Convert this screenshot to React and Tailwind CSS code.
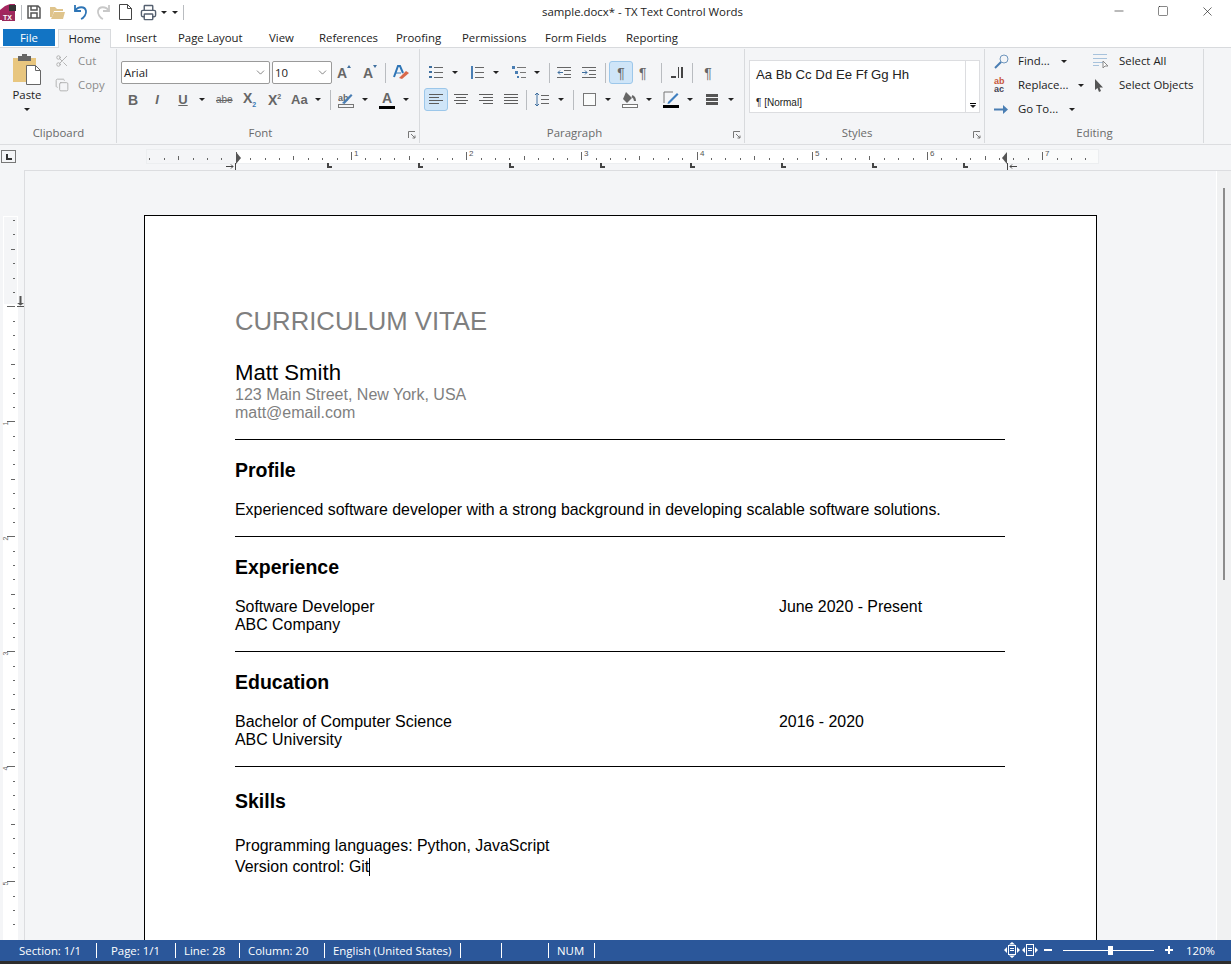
import React from "react";
import { Printer, ChevronDown, Scissors, Copy, Minus, Square, X } from "lucide-react";

const Caret = ({ className = "" }) => (
  <span className={`inline-block shrink-0 w-0 h-0 border-x-[3px] border-x-transparent border-t-[3px] border-t-[#222] ${className}`} />
);

const Sep = ({ className = "" }) => <span className={`shrink-0 w-px h-[20px] bg-[#b9bcc0] ${className}`} />;

// little 14x13 ribbon glyphs, all the line-based paragraph ones share this
const Ico = ({ w = 14, h = 13, className = "", children }) => (
  <svg className={`shrink-0 ${className}`} width={w} height={h} viewBox={`0 0 ${w} ${h}`} fill="none">{children}</svg>
);

const Bars = ({ rows }) => (
  <Ico>
    {rows.map(([x, len], i) => (
      <rect key={i} x={x} y={1 + i * 3} width={len} height="1" fill="#5c5c5c" />
    ))}
  </Ico>
);

const Bullets = () => (
  <Ico>
    {[1, 6, 11].map((y) => (
      <g key={y}>
        <rect x="0" y={y - 1} width="3" height="2" fill="#3f6f9f" />
        <rect x="5" y={y} width="9" height="1" fill="#666" />
      </g>
    ))}
  </Ico>
);

const Numbers = () => (
  <Ico>
    <rect x="1" y="0" width="2" height="13" fill="#4a7eb3" />
    {[1, 6, 11].map((y) => (
      <rect key={y} x="5" y={y} width="9" height="1" fill="#666" />
    ))}
  </Ico>
);

const Multi = () => (
  <Ico>
    <rect x="0" y="0" width="3" height="3" fill="#4a7eb3" />
    <rect x="3" y="5" width="3" height="3" fill="#4a7eb3" />
    <rect x="5" y="10" width="2" height="2" fill="#4a7eb3" />
    <rect x="5" y="1" width="9" height="1" fill="#777" />
    <rect x="8" y="6" width="6" height="1" fill="#777" />
    <rect x="9" y="11" width="5" height="1" fill="#777" />
  </Ico>
);

const Indent = ({ flip }) => (
  <Ico>
    <rect x="0" y="1" width="14" height="1" fill="#666" />
    <rect x="0" y="11" width="14" height="1" fill="#666" />
    <rect x="7" y="4" width="7" height="1" fill="#666" />
    <rect x="7" y="8" width="7" height="1" fill="#666" />
    {flip ? (
      <path d="M0 6.500h5M3 4.500l2 2-2 2" stroke="#3f6f9f" />
    ) : (
      <path d="M6 6.500H1M3 4.500l-2 2 2 2" stroke="#3f6f9f" />
    )}
  </Ico>
);

const Para = ({ className = "" }) => (
  <span className={`font-['Liberation_Sans',sans-serif] text-[14px] leading-none text-[#666] ${className}`}>¶</span>
);

const Spacing = () => (
  <Ico>
    <path d="M2 0v13M0 2l2-2 2 2M0 11l2 2 2-2" stroke="#3f6f9f" />
    {[2, 6, 10].map((y) => (
      <rect key={y} x="6" y={y} width="8" height="1" fill="#666" />
    ))}
  </Ico>
);

const Bucket = () => (
  <Ico w={16} h={17}>
    <path d="M4 1l6 6-5 5-4-4z" fill="#666" />
    <path d="M10 5c2 1 3 3 3 5" stroke="#666" strokeWidth="2" />
    <rect x="0.500" y="13.500" width="15" height="3" fill="#fff" stroke="#777" />
  </Ico>
);

const BorderPen = () => (
  <Ico w={16} h={17}>
    <path d="M1 12V1h9" stroke="#777" />
    <path d="M5 11l9-9 1.500 1.500-9 9-2 .5z" fill="#3f7fbf" />
    <rect x="0" y="14" width="16" height="3" fill="#000" />
  </Ico>
);

const ClearFmt = () => (
  <Ico w={16} h={15}>
    <path d="M1 12L5 1h2l3 7" stroke="#2e75b6" strokeWidth="2" />
    <path d="M3 8h5" stroke="#2e75b6" />
    <path d="M6 13l7-7 3 2-7 6z" fill="#d9694a" />
  </Ico>
);

const Highlight = () => (
  <Ico w={16} h={16}>
    <text x="0" y="9" fontSize="9" fill="#666" fontFamily="Liberation Sans">ab</text>
    <path d="M4 11l9-9 1.500 1.500-8 8.500z" fill="#4a7eb3" />
    <rect x="0.500" y="12.500" width="15" height="3" fill="#f4f5f7" stroke="#777" />
  </Ico>
);

const Grow = ({ down, className = "" }) => (
  <span className={`relative block shrink-0 w-[14px] h-[16px] text-[14px] leading-[16px] font-bold text-[#666] font-['Liberation_Sans',sans-serif] ${className}`}>
    A
    <span className={`absolute right-0 top-0 w-0 h-0 border-x-[2.500px] border-x-transparent ${down ? "border-t-[3px] border-t-[#3f6f9f]" : "border-b-[3px] border-b-[#3f6f9f]"}`} />
  </span>
);

const Group = ({ title, className, launcher, children }) => (
  <div className={`relative shrink-0 ${className}`}>
    <div className="h-[76px]">{children}</div>
    <div className={`text-center text-[11.400px] text-[#6a6a6a] leading-4 ${launcher ? "pr-[16px]" : ""}`}>{title}</div>
    <span className="absolute right-0 top-0 bottom-0 w-px bg-[#d8dadd]" />
    {launcher && (
      <svg className="absolute right-[4px] bottom-[4px]" width="8" height="8" viewBox="0 0 8 8" fill="none" stroke="#777">
        <path d="M.5 7V.5H7M3 3l4 4M7 4.500V7H4.500" />
      </svg>
    )}
  </div>
);

const Clip = () => (
  <svg width="30" height="32" viewBox="0 0 30 32">
    <rect x="1" y="4" width="23" height="24" fill="#e8c67f" />
    <rect x="6" y="2" width="13" height="5" fill="#666" />
    <rect x="10" y="0" width="5" height="3" fill="#666" />
    <path d="M14.500 11.500h9l5 5v14h-14z" fill="#fff" stroke="#666" />
    <path d="M23.500 11.500v5h5" fill="none" stroke="#666" />
  </svg>
);

const tabs = [
  ["Insert", "w-[52px]"],
  ["Page Layout", "w-[91px]"],
  ["View", "w-[50px]"],
  ["References", "w-[77px]"],
  ["Proofing", "w-[66px]"],
  ["Permissions", "w-[83px]"],
  ["Form Fields", "w-[81px]"],
  ["Reporting", "w-[72px]"],
];

const Ruler = () => (
  <div className="relative h-[25px] shrink-0 bg-[#f4f5f7] flex">
    <div className="w-[146px] shrink-0 pt-[5px] pl-[1px]">
      <div className="w-[15px] h-[13px] border border-[#777] bg-[#f4f5f7] flex items-end justify-center pb-[2px]">
        <span className="w-[6px] h-[6px] border-l-2 border-b-2 border-[#333]" />
      </div>
    </div>
    <div className="relative w-[953px] h-[15px] mt-[4px] bg-white border border-[#eceef0]">
      <div className="absolute left-0 top-0 bottom-0 w-[89px] bg-[#f4f5f7]" />
      <div className="absolute right-0 top-0 bottom-0 w-[94px] bg-[#fafbfb]" />
      {[["1", 207], ["2", 322], ["3", 437], ["4", 553], ["5", 668], ["6", 783], ["7", 898]].map(([n, l]) => (
        <span key={n} className="absolute top-0 text-[8px] leading-[8px] text-[#555] font-['Liberation_Sans',sans-serif]" style={{ left: l }}>{n}</span>
      ))}
      <svg className="absolute left-0 top-0" width="953" height="15" viewBox="147 150 953 15">
        {Array.from({ length: 66 }, (_, i) => i).map((i) => {
          const x = Math.round(149.400 + i * 14.400);
          const inch = i % 8 === 6;
          const mid = i % 8 === 2;
          return <rect key={i} x={x} y={inch ? 152 : mid ? 156 : 158} width="1" height={inch ? 8 : mid ? 4 : 2} fill="#666" />;
        })}
      </svg>
      <svg className="absolute left-[89px] top-[2px]" width="6" height="12" viewBox="0 0 6 12"><path d="M0 0l5 6-5 6z" fill="#555" /></svg>
      <svg className="absolute left-[855px] top-[2px]" width="6" height="12" viewBox="0 0 6 12"><path d="M5 0L0 6l5 6z" fill="#555" /></svg>
    </div>
    {/* tab stops and the two indent marks under the strip */}
    {[327, 418, 509, 600, 690, 781, 872, 963].map((x) => (
      <span key={x} className="absolute top-[18px] w-[5px] h-[5px] border-l-2 border-b-2 border-[#444]" style={{ left: x }} />
    ))}
    <svg className="absolute left-[226px] top-[18px]" width="10" height="7" viewBox="0 0 10 7" fill="none" stroke="#444"><path d="M0 3.500h7M5 1.500l2 2-2 2M9.500 0v7" /></svg>
    <svg className="absolute left-[1007px] top-[18px]" width="10" height="7" viewBox="0 0 10 7" fill="none" stroke="#444"><path d="M10 3.500H3M5 1.500l-2 2 2 2M.5 0v7" /></svg>
  </div>
);

const VRuler = () => {
  const marks = [];
  for (let i = 0; i < 50; i++) {
    const y = Math.round(4 + i * 14.375);
    const inch = i % 8 === 6;
    const half = i % 8 === 2;
    marks.push(<span key={i} className="absolute h-px bg-[#666]" style={{ top: y, left: inch ? 7 : half ? 11 : 13, width: inch ? 8 : half ? 4 : 2 }} />);
  }
  return (
    <div className="relative w-[24px] shrink-0 overflow-hidden">
      <div className="absolute left-[3px] top-[46px] bottom-0 w-[15px] bg-white" />
      <div className="absolute left-[3px] top-[46px] h-[88px] w-[15px] bg-[#f4f5f7] border border-white border-b-0" />
      <div className="absolute left-0 top-[46px] w-full h-full">
        {marks}
        {[["1", 204], ["2", 319], ["3", 434], ["4", 549], ["5", 664]].map(([n, t]) => (
          <span key={n} className="absolute left-[4px] text-[7px] leading-[7px] text-[#666] rotate-[-90deg] font-['Liberation_Sans',sans-serif]" style={{ top: t }}>{n}</span>
        ))}
      </div>
      <svg className="absolute left-[17px] top-[126px]" width="7" height="12" viewBox="0 0 7 12" fill="#555">
        <rect x="2.500" y="0" width="2" height="8" /><path d="M0 7h7L3.500 9.500z" /><rect x="0" y="10" width="7" height="1" />
      </svg>
    </div>
  );
};

const Rule = () => <div className="h-px bg-black" />;

const StatusCell = ({ w, children }) => (
  <div className={`h-full flex items-center whitespace-nowrap border-r border-white ${w}`}>{children}</div>
);

const FitIcon = ({ whole }) => (
  <svg width="16" height="16" viewBox="0 0 16 16" fill="#fff" className="shrink-0">
    <rect x="4.500" y={whole ? 2.500 : 3.500} width="7" height={whole ? 11 : 9} fill="none" stroke="#fff" />
    <rect x="6" y="6" width="4" height="1" /><rect x="6" y="8" width="4" height="1" />
    <path d="M0 8l3-3v6zM16 8l-3-3v6z" />
    {!whole && <path d="M8 0l3 2.500H5zM8 16l3-2.500H5z" />}
  </svg>
);

export default function App() {
  return (
    <div className="w-[1231px] h-[964px] overflow-hidden flex flex-col bg-white font-['Open_Sans',sans-serif] text-[11.400px] text-[#222]">
      {/* title bar */}
      <div className="h-[24px] shrink-0 flex items-center relative">
        <svg width="17" height="20" viewBox="0 0 17 20">
          <path d="M0 8l5-4 5-2 5 0v16H0z" fill="#a4265f" />
          <rect x="9" y="3" width="7" height="6" fill="#333" />
          <rect x="2" y="11" width="13" height="8" fill="#9a2a5c" />
          <text x="3" y="18" fontSize="7" fontWeight="700" fill="#fff" fontFamily="Liberation Sans">TX</text>
        </svg>
        <Sep className="ml-[4px] !h-[15px]" />
        <svg className="ml-[5px]" width="14" height="14" viewBox="0 0 14 14" fill="none" stroke="#555" strokeWidth="1.500">
          <path d="M1 1h10l2 2v10H1z" />
          <path d="M4 1v4h6V1M4 13V8h6v5" />
        </svg>
        <svg className="ml-[9px]" width="15" height="13" viewBox="0 0 15 13" fill="#dfc48c">
          <path d="M0 1h5l2 2h6v2H4l-2 6H0z" />
          <path d="M4 6h11l-2 7H1z" />
        </svg>
        <svg className="ml-[8px]" width="15" height="16" viewBox="0 0 15 16" fill="none" stroke="#2e75b6" strokeWidth="1.800">
          <path d="M2 1v6h6" />
          <path d="M2 7c3-5 10-5 11 0 .5 3-2 7-5 8" />
        </svg>
        <svg className="ml-[8px]" width="15" height="16" viewBox="0 0 15 16" fill="none" stroke="#c8c8c8" strokeWidth="1.800">
          <path d="M13 1v6H7" />
          <path d="M13 7c-3-5-10-5-11 0-.5 3 2 7 5 8" />
        </svg>
        <svg className="ml-[8px]" width="13" height="16" viewBox="0 0 13 16" fill="#fff" stroke="#444">
          <path d="M.5.500h8l4 4v11H.5z" /><path d="M8.500.500v4h4" fill="none" />
        </svg>
        <Printer size={17} strokeWidth={2} className="ml-[8px] text-[#556070]" />
        <Caret className="ml-[4px]" />
        <Caret className="ml-[5px]" />
        <Sep className="ml-[5px] !h-[15px]" />
        <div className="absolute left-[542px] top-[4px] leading-4 whitespace-nowrap">sample.docx* - TX Text Control Words</div>
        <div className="ml-auto flex items-center pr-[16px] gap-[31px] pb-[2px]">
          <Minus size={14} strokeWidth={1} className="text-[#111]" />
          <Square size={12} strokeWidth={1} className="text-[#111]" />
          <X size={15} strokeWidth={1} className="text-[#111]" />
        </div>
      </div>

      {/* tabs */}
      <div className="h-[24px] shrink-0 flex items-end border-b border-[#d8dadd]">
        <div className="ml-[3px] w-[52px] h-[17px] mb-px bg-[#1274c4] text-white flex items-center justify-center leading-none">File</div>
        <div className="ml-[3px] w-[53px] h-[19px] -mb-px bg-[#f4f5f7] border border-b-0 border-[#d8dadd] flex items-center justify-center leading-none">Home</div>
        <div className="flex h-[19px] items-center pl-[15px]">
          {tabs.map(([t, w]) => (
            <span key={t} className={`${w} whitespace-nowrap leading-none`}>{t}</span>
          ))}
        </div>
      </div>

      {/* ribbon */}
      <div className="h-[97px] shrink-0 bg-[#f4f5f7] border-b border-[#dcdde0] flex pt-px">
        <Group title="Clipboard" className="w-[117px] h-[94px]">
          <div className="flex">
            <div className="w-[47px] flex flex-col items-center pt-[5px] pl-[7px]">
              <Clip />
              <span className="leading-4 mt-px">Paste</span>
              <Caret className="mt-[5px]" />
            </div>
            <div className="pl-[8px] text-[#8b8b8b]">
              <div className="flex items-center h-[24px] gap-[9px]"><Scissors size={14} strokeWidth={1.500} className="text-[#aaa]" /><span>Cut</span></div>
              <div className="flex items-center h-[24px] gap-[9px]"><Copy size={14} strokeWidth={1.500} className="text-[#aaa]" /><span>Copy</span></div>
            </div>
          </div>
        </Group>

        <Group title="Font" launcher className="w-[303px] h-[94px]">
          <div className="pt-[12px]">
            <div className="flex items-center h-[23px] pl-[4px]">
              <div className="w-[149px] h-[23px] bg-white border border-[#9a9a9a] rounded-[2px] flex items-center justify-between px-[2px]">Arial<ChevronDown size={13} strokeWidth={1} /></div>
              <div className="ml-[2px] w-[60px] h-[23px] bg-white border border-[#9a9a9a] rounded-[2px] flex items-center justify-between px-[2px]">10<ChevronDown size={13} strokeWidth={1} /></div>
              <Grow className="ml-[5px]" />
              <Grow down className="ml-[12px]" />
              <Sep className="ml-[8px]" />
              <span className="ml-[7px]"><ClearFmt /></span>
            </div>
            <div className="flex items-center h-[23px] mt-[4px] pl-[11px] text-[#666] font-['Liberation_Sans',sans-serif] font-bold leading-none">
              <span className="w-[10px] text-[14px] text-center">B</span>
              <span className="ml-[16px] w-[6px] italic text-[13px] text-center">I</span>
              <span className="ml-[18px] w-[10px] underline text-[13px] text-center">U</span>
              <Caret className="ml-[11px]" />
              <span className="ml-[11px] w-[16px] line-through font-normal text-[10px] text-center">abe</span>
              <span className="ml-[11px] w-[14px] text-[14px] whitespace-nowrap">X<span className="text-[7px] text-[#3a78b5] align-sub">2</span></span>
              <span className="ml-[11px] w-[14px] text-[14px] whitespace-nowrap">X<span className="text-[7px] align-super">2</span></span>
              <span className="ml-[9px] w-[16px] text-[13px] whitespace-nowrap">Aa</span>
              <Caret className="ml-[8px]" />
              <Sep className="ml-[9px]" />
              <span className="ml-[7px]"><Highlight /></span>
              <Caret className="ml-[8px]" />
              <span className="ml-[11px] w-[16px] h-[18px] text-[14px] leading-[14px] border-b-[3px] border-black text-center">A</span>
              <Caret className="ml-[8px]" />
            </div>
          </div>
        </Group>

        <Group title="Paragraph" launcher className="w-[325px] h-[94px]">
          <div className="pt-[12px]">
            <div className="flex items-center h-[23px] pl-[9px]">
              <Bullets />
              <Caret className="ml-[9px]" />
              <span className="ml-[12px]"><Numbers /></span>
              <Caret className="ml-[9px]" />
              <span className="ml-[13px]"><Multi /></span>
              <Caret className="ml-[8px]" />
              <Sep className="ml-[9px]" />
              <span className="ml-[7px]"><Indent /></span>
              <span className="ml-[11px]"><Indent flip /></span>
              <Sep className="ml-[9px]" />
              <span className="ml-[3px] w-[24px] h-[23px] bg-[#cfe5f8] border border-[#9cc7ea] rounded-[3px] flex items-center justify-center"><Para /></span>
              <span className="ml-[6px] w-[12px] flex items-center"><Para /></span>
              <Sep className="ml-[10px]" />
              <span className="ml-[9px] flex items-end gap-[2px] w-[12px] h-[11px]">
                <span className="w-[6px] h-[2px] bg-[#444]" /><span className="w-[2px] h-[11px] bg-[#444]" /><span className="w-[2px] h-[11px] bg-[#444]" />
              </span>
              <Sep className="ml-[9px]" />
              <span className="ml-[11px] w-[8px] flex justify-center"><Para /></span>
            </div>
            <div className="flex items-center h-[23px] mt-[4px] pl-[4px]">
              <span className="w-[24px] h-[23px] bg-[#cfe5f8] border border-[#9cc7ea] rounded-[3px] flex items-center justify-center"><Bars rows={[[0, 14], [0, 10], [0, 14], [0, 10]]} /></span>
              <span className="ml-[6px]"><Bars rows={[[0, 14], [2, 10], [0, 14], [2, 10]]} /></span>
              <span className="ml-[11px]"><Bars rows={[[0, 14], [4, 10], [0, 14], [4, 10]]} /></span>
              <span className="ml-[11px]"><Bars rows={[[0, 14], [0, 14], [0, 14], [0, 14]]} /></span>
              <Sep className="ml-[8px]" />
              <span className="ml-[8px]"><Spacing /></span>
              <Caret className="ml-[9px]" />
              <Sep className="ml-[9px]" />
              <span className="ml-[9px] w-[13px] h-[13px] border border-[#777] bg-[#fafbfb]" />
              <Caret className="ml-[9px]" />
              <span className="ml-[11px]"><Bucket /></span>
              <Caret className="ml-[8px]" />
              <span className="ml-[11px]"><BorderPen /></span>
              <Caret className="ml-[8px]" />
              <span className="ml-[13px] flex flex-col gap-px">
                <span className="w-[12px] h-[3px] bg-[#555]" /><span className="w-[12px] h-[3px] bg-[#555]" /><span className="w-[12px] h-[3px] bg-[#555]" />
              </span>
              <Caret className="ml-[10px]" />
            </div>
          </div>
        </Group>

        <Group title="Styles" launcher className="w-[240px] h-[94px]">
          <div className="pt-[11px] pl-[4px]">
            <div className="w-[231px] h-[53px] bg-white border border-[#dcdde0] flex">
              <div className="flex-1 flex flex-col justify-between pl-[6px] font-['Liberation_Sans',sans-serif]">
                <span className="text-[13.200px] leading-4 pt-[6px] whitespace-nowrap">Aa Bb Cc Dd Ee Ff Gg Hh</span>
                <span className="text-[10px] leading-3 pb-[3px]">¶ [Normal]</span>
              </div>
              <div className="w-[14px] border-l border-[#dcdde0] flex flex-col items-center justify-end pb-[4px]">
                <span className="w-[6px] h-px bg-black mb-px" />
                <Caret />
              </div>
            </div>
          </div>
        </Group>

        <Group title="Editing" className="w-[219px] h-[94px]">
          <div className="flex">
            <div className="w-[108px] pl-[9px]">
              <div className="flex items-center h-[24px]">
                <svg width="15" height="15" viewBox="0 0 15 15" fill="none" className="shrink-0">
                  <circle cx="10" cy="5" r="4" stroke="#6f96bd" />
                  <path d="M7 8l-6 6" stroke="#4a7eb3" strokeWidth="2" />
                </svg>
                <span className="ml-[9px]">Find...</span><Caret className="ml-[11px]" />
              </div>
              <div className="flex items-center h-[24px]">
                <span className="w-[15px] shrink-0 text-[9px] leading-[8px] font-bold text-[#445] font-['Liberation_Sans',sans-serif]"><span className="text-[#c9573c]">ab</span><br />ac</span>
                <span className="ml-[9px]">Replace...</span><Caret className="ml-[10px]" />
              </div>
              <div className="flex items-center h-[24px]">
                <svg width="15" height="9" viewBox="0 0 15 9" className="shrink-0" fill="#4a7eb3">
                  <rect x="0" y="3.500" width="11" height="2" /><path d="M9 0l5 4.500L9 9z" />
                </svg>
                <span className="ml-[9px]">Go To...</span><Caret className="ml-[11px]" />
              </div>
            </div>
            <div>
              <div className="flex items-center h-[24px]">
                <svg width="16" height="15" viewBox="0 0 16 15" fill="none" className="shrink-0">
                  <path d="M.5.500h13M.5 4.500h13M.5 8.500h9M.5 11.500h6" stroke="#5a8fc0" strokeDasharray="1 1" />
                  <path d="M10 7v7l2-2 3 0z" fill="#fff" stroke="#888" />
                </svg>
                <span className="ml-[10px]">Select All</span>
              </div>
              <div className="flex items-center h-[24px]">
                <svg width="16" height="13" viewBox="0 0 16 13" className="shrink-0"><path d="M2 0v11l2.500-2 1.500 4 2-1-1.500-3.500H10z" fill="#555" /></svg>
                <span className="ml-[10px]">Select Objects</span>
              </div>
            </div>
          </div>
        </Group>
      </div>

      <Ruler />

      {/* document area */}
      <div className="flex-1 min-h-0 flex bg-[#f4f5f7]">
        <VRuler />
        <div className="flex-1 min-w-0 flex border-l border-t border-[#dcdde0]">
          <div className="flex-1 min-w-0 pl-[119px] pt-[44px] overflow-hidden">
            <div className="w-[953px] h-[900px] bg-white border border-black pl-[90px] pr-[91px] pt-[90px] font-['Liberation_Sans',sans-serif] text-[15.900px] text-black">
              <div className="text-[25.700px] leading-[30px] text-[#7f7f7f]">CURRICULUM VITAE</div>
              <div className="text-[22.200px] leading-[27px] mt-[23px]">Matt Smith</div>
              <div className="text-[#7f7f7f] text-[16px] leading-[18px]">123 Main Street, New York, USA</div>
              <div className="text-[#7f7f7f] text-[16px] leading-[18px]">matt@email.com</div>
              <div className="mt-[17px]"><Rule /></div>
              <div className="text-[19.500px] font-bold leading-[22px] mt-[19px]">Profile</div>
              <div className="leading-[18px] mt-[20px]">Experienced software developer with a strong background in developing scalable software solutions.</div>
              <div className="mt-[17px]"><Rule /></div>
              <div className="text-[19.500px] font-bold leading-[22px] mt-[19px]">Experience</div>
              <div className="leading-[18px] mt-[20px] flex"><span className="w-[544px]">Software Developer</span><span>June 2020 - Present</span></div>
              <div className="leading-[18px]">ABC Company</div>
              <div className="mt-[17px]"><Rule /></div>
              <div className="text-[19.500px] font-bold leading-[22px] mt-[19px]">Education</div>
              <div className="leading-[18px] mt-[20px] flex"><span className="w-[544px] text-[16px]">Bachelor of Computer Science</span><span>2016 - 2020</span></div>
              <div className="leading-[18px]">ABC University</div>
              <div className="mt-[17px]"><Rule /></div>
              <div className="text-[19.500px] font-bold leading-[22px] mt-[23px]">Skills</div>
              <div className="leading-[18px] mt-[25px]">Programming languages: Python, JavaScript</div>
              <div className="leading-[18px] mt-[3px]">Version control: Git<span className="inline-block w-px h-[18px] bg-black align-bottom" /></div>
            </div>
          </div>
          <div className="w-[15px] shrink-0 bg-[#f0f1f2] border-l border-white pt-[17px] pl-[6px]">
            <div className="h-[392px] w-[2px] bg-[#8c8c8c]" />
          </div>
        </div>
      </div>

      {/* status bar */}
      <div className="h-[24px] shrink-0 bg-[#2b579a] border-b-[3px] border-[#2d2d2d] text-white flex items-center pl-[11px]">
        <div className="flex h-[15px]">
          <StatusCell w="w-[86px] pl-[8px]">Section: 1/1</StatusCell>
          <StatusCell w="w-[79px] pl-[14px]">Page: 1/1</StatusCell>
          <StatusCell w="w-[64px] pl-[8px]">Line: 28</StatusCell>
          <StatusCell w="w-[85px] pl-[8px]">Column: 20</StatusCell>
          <StatusCell w="w-[136px] pl-[8px]">English (United States)</StatusCell>
          <StatusCell w="w-[41px]" />
          <StatusCell w="w-[47px]" />
          <StatusCell w="w-[46px] pl-[8px]">NUM</StatusCell>
        </div>
        <div className="ml-auto flex items-center pr-[16px]">
          <FitIcon />
          <span className="ml-[2px]"><FitIcon whole /></span>
          <span className="ml-[6px] w-[8px] h-[2px] bg-white" />
          <div className="relative ml-[11px] w-[91px] h-px bg-white">
            <span className="absolute left-[45px] -top-[4px] w-[5px] h-[9px] bg-white" />
          </div>
          <span className="relative ml-[11px] w-[8px] h-[8px]">
            <span className="absolute left-0 top-[3px] w-[8px] h-[2px] bg-white" />
            <span className="absolute left-[3px] top-0 w-[2px] h-[8px] bg-white" />
          </span>
          <span className="ml-[13px]">120%</span>
        </div>
      </div>
    </div>
  );
}
